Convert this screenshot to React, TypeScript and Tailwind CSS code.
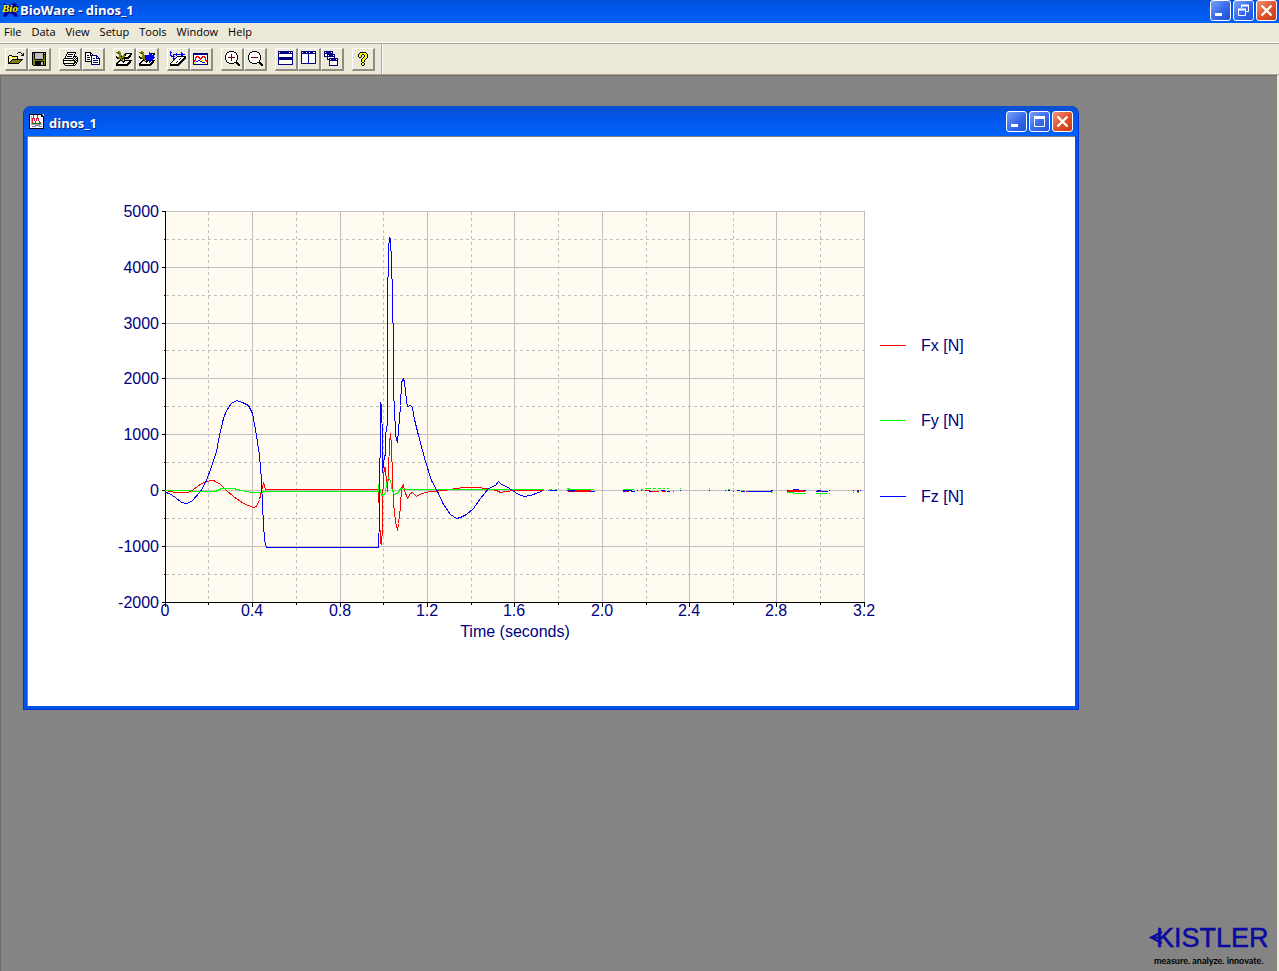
import React from 'react';
import clsx from 'clsx';

const PALETTE: Record<string, string> = {
  k: '#000000',
  w: '#ffffff',
  y: '#ffff00',
  o: '#808000',
  g: '#c0c0c0',
  n: '#000080',
  b: '#0000ff',
  r: '#ff0000',
  m: '#800000',
};

const ICONS: Record<string, string[]> = {
  open: [
    '................',
    '..........kkk...',
    '.........k...k.k',
    '..............kk',
    '.kkk.........kkk',
    'kywykkkkkk......',
    'kwywywywyk......',
    'kywywywywk......',
    'kwywkkkkkkkkkkk.',
    'kywkoooooooook..',
    'kwkoooooooook...',
    'kkoooooooook....',
    'kkkkkkkkkkk.....',
  ],
  save: [
    '',
    '.kkkkkkkkkkkkkk',
    '.kokggggggggkgk',
    '.kokggggggggkkk',
    '.kokggggggggkok',
    '.kokggggggggkok',
    '.kokggggggggkok',
    '.kokggggggggkok',
    '.kookkkkkkkkook',
    '.kooooooooooook',
    '.kookkkkkkkkkok',
    '.kookkkkkkggkok',
    '.kookkkkkkggkok',
    '.kookkkkkkggkok',
    '..kkkkkkkkkkkkk',
  ],
  print: [
    '',
    '.....kkkkkkkkk..',
    '.....kwwwwwwwk..',
    '....kwkkkkkwk...',
    '....kwwwwwwwk...',
    '...kwkkkkkwkkkk.',
    '...kwwwwwwwkwkwk',
    '..kkkkkkkkkwkwkk',
    '.kwwwwwwwwwkwkwk',
    '.kkkkkkkkkkkkwkk',
    '.kwwwwwyyywwkkwk',
    '.kwwwwwwwwwwkkk.',
    '.kkkkkkkkkkkkwk.',
    '..kwwwwwwwwkwk..',
    '...kkkkkkkkkk...',
  ],
  copy: [
    '',
    'kkkkkk..........',
    'kwwwwkk.........',
    'kwwwwkwk........',
    'kwkkwknnnnnn....',
    'kwwwwwnwwwwnn...',
    'kwkkkwnwwwwnwn..',
    'kwwwwwnwnnwnnnn.',
    'kwkkkwnwwwwwwwn.',
    'kwwwwwnwnnnnnwn.',
    'kkkkkknwwwwwwwn.',
    '......nwnnnnnwn.',
    '......nwwwwwwwn.',
    '......nnnnnnnnn.',
  ],
  acquire: [
    '..oo............',
    'ooooo...........',
    '.okoo....kkkkkkk',
    '...oo...kkwwwwkk',
    '...ooo.ookwwwkk.',
    'k..ookooowwwkkk.',
    'kkooooookkkkkk..',
    '.kkoookkkkkkk...',
    '....kooyk.......',
    '...kkkoykkkkkkkk',
    '..kkwwkkkwwwwkk.',
    '.kkwwwwkwwwwkkk.',
    'kkwwwwwwwwwkkk..',
    'kkkkkkkkkkkkk...',
    'kkkkkkkkkkkk....',
  ],
  trigger: [
    '..oo............',
    'ooooo.....b.....',
    '.okoo.....bbkkkk',
    '...oo.....bbbwkk',
    '...ooobbbbbbbbk.',
    'k..ooobbbbbbbbb.',
    'kkooookbbbbbbbbb',
    '.kkooobbbbbbbbb.',
    '....kobbbbbbbb..',
    '...kkkykkkbbbkkk',
    '..kkwwkkkwbbwkk.',
    '.kkwwwwkwwbwkkk.',
    'kkwwwwwwwwwkkk..',
    'kkkkkkkkkkkkk...',
    'kkkkkkkkkkkk....',
  ],
  plate: [
    'b...............',
    'bb.........b....',
    'b.....b....bb...',
    'b..bbbbbbbbbbbb.',
    'bb.b..b....bb...',
    '.bbbb..kkkkkkkkk',
    '...b..kwwwwwwwkk',
    '...bbkwwwwkwwkkk',
    '...bkwwwwkwwkkk.',
    '...kwwwwwwwkkk..',
    '..kwwwwkwwkkk...',
    '.kwwwwkwwkkk....',
    'kwwwwwwwkkk.....',
    'kkkkkkkkkk......',
    'kkkkkkkkk.......',
  ],
  graph: [
    '',
    '',
    'nnnnnnnnnnnnnnn',
    'nnnnnnnnnnnnnnn',
    'nwwwwwwwwwwwwwn',
    'nwwrrrwwwrrrwwn',
    'nwrrwrrwrrwrrwn',
    'nwrwwwrrrwwwrwn',
    'nwrwwwwrwwwwrwn',
    'nrrwwbbwyywwrrn',
    'nrwbbwwbbyywwrn',
    'nwywwwwwwbbbwwn',
    'nyywwwwwwwwyywn',
    'nnnnnnnnnnnnnnn',
  ],
  tileRows: [
    'nnnnnnnnnnnnnnn',
    'nwnnnnnnnnnwnwn',
    'nnnnnnnnnnnnnnn',
    'nwwwwwwwwwwwwwn',
    'nwwwwwwwwwwwwwn',
    'nwwwwwwwwwwwwwn',
    'nnnnnnnnnnnnnnn',
    'nnnnnnnnnnnnnnn',
    'nnnnnnnnnnnnnnn',
    'nwwwwwwwwwwwwwn',
    'nwwwwwwwwwwwwwn',
    'nwwwwwwwwwwwwwn',
    'nwwwwwwwwwwwwwn',
    'nnnnnnnnnnnnnnn',
  ],
  tileColumns: [
    'nnnnnnnnnnnnnnn',
    'nwnnnwnnwnnnwwn',
    'nnnnnnnnnnnnnnn',
    'nwwwwwwnwwwwwwn',
    'nwwwwwwnwwwwwwn',
    'nwwwwwwnwwwwwwn',
    'nwwwwwwnwwwwwwn',
    'nwwwwwwnwwwwwwn',
    'nwwwwwwnwwwwwwn',
    'nwwwwwwnwwwwwwn',
    'nwwwwwwnwwwwwwn',
    'nwwwwwwnwwwwwwn',
    'nnnnnnnnnnnnnnn',
  ],
  cascade: [
    'nnnnnnnnn.....',
    'nwnnnnnwn.....',
    'nnnnnnnnn.....',
    'nwwnnnnnnnn...',
    'nwwnwnnnnwn...',
    'nnnnnnnnnnn...',
    '...nwwwwwwn...',
    '...nwnnnnnnnnn',
    '...nnnwnnnnnwn',
    '.....nnnnnnnnn',
    '.....nwwwwwwwn',
    '.....nwwwwwwwn',
    '.....nwwwwwwwn',
    '.....nwwwwwwwn',
    '.....nnnnnnnnn',
  ],
  help: [
    '',
    '.....kkkkkk...',
    '....kyyyyyyk..',
    '...kyyykkyyyk.',
    '...kyyk..kyyk.',
    '...kyyk..kyyk.',
    '....kk..kyyyk.',
    '.......kyyyk..',
    '......kyyyk...',
    '......kyyk....',
    '......kyyk....',
    '.......kk.....',
    '......kyyk....',
    '......kyyk....',
    '.......kk.....',
  ],
};

const zoomIcon = (plus: boolean) => [
  '.....kkkkk......',
  '...kkwwwwwkk....',
  '..kwwwwwwwwwk...',
  plus ? '..kwwwwmwwwwk...' : '..kwwwwwwwwwk...',
  plus ? '.kwwwwwmwwwwwk..' : '.kwwwwwwwwwwwk..',
  plus ? '.kwwwwwmwwwwwk..' : '.kwwwwwwwwwwwk..',
  '.kwwmmmmmmmwwk..',
  plus ? '.kwwwwwmwwwwwk..' : '.kwwwwwwwwwwwk..',
  plus ? '.kwwwwwmwwwwwk..' : '.kwwwwwwwwwwwk..',
  plus ? '..kwwwwmwwwwk...' : '..kwwwwwwwwwk...',
  '..kwwwwwwwwwk...',
  '...kkwwwwwkkkk..',
  '.....kkkkk..kkk.',
  '.............kkk',
  '..............kk',
];

ICONS.zoomIn = zoomIcon(true);
ICONS.zoomOut = zoomIcon(false);

const PixelIcon = ({ rows }: { rows: string[] }) => {
  const runs: React.ReactElement[] = [];
  rows.forEach((row, y) => {
    let x = 0;
    while (x < row.length) {
      let end = x + 1;
      while (row[end] === row[x]) end++;
      if (row[x] !== '.') {
        runs.push(<rect key={`${x}-${y}`} x={x} y={y} width={end - x} height={1} fill={PALETTE[row[x]]} />);
      }
      x = end;
    }
  });
  return (
    <svg width="16" height="16" viewBox="0 0 16 16" shapeRendering="crispEdges" aria-hidden="true">
      {runs}
    </svg>
  );
};

const TOOL_GROUPS = [
  [['open', 'Open'], ['save', 'Save']],
  [['print', 'Print'], ['copy', 'Copy']],
  [['acquire', 'Acquire data'], ['trigger', 'Start acquisition']],
  [['plate', 'Force plate'], ['graph', 'Graph']],
  [['zoomIn', 'Zoom in'], ['zoomOut', 'Zoom out']],
  [['tileRows', 'Tile horizontally'], ['tileColumns', 'Tile vertically'], ['cascade', 'Cascade']],
  [['help', 'Help']],
];

const MENUS = ['File', 'Data', 'View', 'Setup', 'Tools', 'Window', 'Help'];

type CaptionKind = 'minimize' | 'maximize' | 'restore' | 'close';

const CaptionButton = ({ kind }: { kind: CaptionKind }) => (
  <button
    type="button"
    aria-label={kind}
    className={clsx(
      'h-[21px] w-[21px] rounded-[3px] border border-white flex items-center justify-center shrink-0',
      kind === 'close'
        ? 'bg-linear-to-br from-[#ee9478] via-[#e0532b] to-[#c63a10]'
        : 'bg-linear-to-br from-[#7da2f5] via-[#3b6cec] to-[#1c4fd6]'
    )}
  >
    <svg width="19" height="19" viewBox="0 0 19 19" fill="none" stroke="#fff" aria-hidden="true">
      {kind === 'minimize' && <path d="M4 13.5h7" strokeWidth="3" />}
      {kind === 'maximize' && (
        <>
          <path d="M4.5 5v9.5h10V5" />
          <path d="M4 5.5h11" strokeWidth="3" />
        </>
      )}
      {kind === 'restore' && (
        <>
          <path d="M7.5 7V4.5M14.5 4v6.5H12" />
          <path d="M7 4.5h8M4 8.5h8" strokeWidth="2" />
          <path d="M4.5 8v6.5h7V8" />
        </>
      )}
      {kind === 'close' && <path d="M4.5 4.5l10 10M14.5 4.5l-10 10" strokeWidth="2.4" />}
    </svg>
  </button>
);

const AppIcon = () => (
  <svg width="17" height="16" viewBox="0 0 17 16" aria-hidden="true">
    <path d="M2 1l4 3 6-3 3 1-3 5 4 7-2 1-6-4-5 4-2-1 3-6-3-5z" fill="#00009c" />
    <path d="M1 4h15v6H1z" fill="#101030" />
    <text x="0" y="10" fontSize="11" fontWeight="bold" fontStyle="italic" fill="#ffff00" className="font-['Liberation_Serif',serif]">
      Bio
    </text>
  </svg>
);

const DocumentIcon = () => (
  <svg width="15" height="15" viewBox="0 0 15 15" shapeRendering="crispEdges" aria-hidden="true">
    <path d="M0 0h12l3 3v12H0z" fill="#000" />
    <path d="M1 1h11v2h2v11H1z" fill="#fff" />
    <path d="M12 0h3v3z" fill="#c0c0c0" />
    <path d="M2.5 11V2M2 10.5h11" stroke="#b0a0a0" />
    <path d="M3.5 9V6l1-3 1 3 1 2 1-2 1-3 1 3 1 2 1 1" fill="none" stroke="#e01030" />
    <path d="M3 9.5h9" stroke="#008000" />
    <path d="M3 12.5h3v-1h4v1h3" fill="none" stroke="#8080c0" />
  </svg>
);

const FZ =
  '165,492 169,493 175,497 181,502 186,503 191,501 200,491 206,480 211,466 216,451 219,435 223,418 226,410 231,403 236,400 242,402 248,405 252,413 256,435 259,455 261,480 262,506 264,540 266,547 378,547 379,518 380,402 381,405 382,440 382,472 384,455 385,455 385,435 387,423 387,306 388,249 389,237 390,239 391,261 392,295 393,349 393,394 394,406 395,435 397,442 398,430 400,405 401,382 403,378 404,382 406,400 407,406 410,405 412,407 414,419 418,435 425,461 431,480 437,491 443,504 450,514 456,518 460,517 466,514 473,508 480,498 488,488 495,485 498,481 501,484 506,486 512,490 518,494 524,496 530,495 538,492 543,490';
const FX =
  '165,490 175,492 188,492 193,489 201,483 210,480 213,480 220,484 226,490 233,496 243,503 253,507 256,506 259,499 261,491 263,482 265,489 378,489 379,515 380,543 381,544 382,527 382,501 383,477 384,467 385,467 386,483 387,491 388,470 389,443 390,433 391,445 392,477 393,503 395,521 397,530 398,523 400,506 401,488 403,484 404,490 407,498 410,493 412,492 416,496 421,493 430,491 443,490 456,488 463,487 478,487 485,488 496,490 500,492 506,491 513,490 543,490';
const FY =
  '165,490 215,491 221,488 233,488 241,490 251,492 261,492 263,491 378,491 378,484 380,490 381,495 385,493 386,483 388,477 390,480 392,491 394,494 398,492 400,488 405,489 543,489';

// short dashes left by each channel once the plate has settled
const TAIL_FX = 'M540 490h3 M567 491h3 M574 490h16 M573 491h16 M624 491h4 M645 490h3 M650 491h8 M661 491h4 M672 491h1 M745 491h2 M786 491h18 M787 490h16 M818 491h3 M856 490h2';
const TAIL_FY = 'M548 489h3 M554 489h2 M566 488h3 M567 489h26 M622 489h11 M640 489h2 M644 488h6 M652 488h3 M657 488h3 M662 488h2 M666 488h2 M679 488h1 M708 488h1 M727 489h2 M741 490h2 M770 492h2 M786 492h7 M792 493h13 M815 493h11 M828 493h1 M852 492h1 M856 492h2';
const TAIL_FZ = 'M547 490h1 M549 490h7 M566 490h8 M570 491h24 M622 490h9 M622 491h6 M630 491h4 M636 490h1 M640 490h1 M644 490h5 M648 491h4 M653 491h3 M660 490h4 M666 491h3 M679 490h1 M708 490h1 M724 490h1 M727 490h2 M732 491h1 M736 490h3 M740 491h4 M745 491h26 M770 490h2 M786 490h7 M792 489h6 M798 490h7 M815 491h12 M816 490h4 M828 490h1 M852 490h1 M856 491h2 M859 490h1';

const X_MAJOR = [165, 252, 340, 427, 514, 602, 689, 776, 864];
const X_MINOR = [208, 296, 383, 471, 558, 646, 733, 820];
const X_LABELS = ['0', '0.4', '0.8', '1.2', '1.6', '2.0', '2.4', '2.8', '3.2'];
const Y_MAJOR = [211, 267, 323, 378, 434, 490, 546, 602];
const Y_MINOR = [239, 295, 350, 406, 462, 518, 574];
const Y_LABELS = ['5000', '4000', '3000', '2000', '1000', '0', '-1000', '-2000'];

const LEGEND = [
  { label: 'Fx [N]', y: 345, color: '#ff0000' },
  { label: 'Fy [N]', y: 420, color: '#00ff00' },
  { label: 'Fz [N]', y: 496, color: '#0000ff' },
];

const ForceChart = () => (
  <svg
    viewBox="28 137 1047 569"
    className="block w-full h-auto font-['Liberation_Sans',Arial,sans-serif] text-base"
    role="img"
    aria-label="Fx, Fy and Fz against time"
  >
    <rect x="165" y="211" width="700" height="392" fill="#fffbf0" />
    <g transform="translate(0.5 0.5)" fill="none" strokeWidth="1" strokeLinejoin="bevel" shapeRendering="crispEdges">
      <g stroke="#c0c0c0">
        {X_MAJOR.map((x) => <path key={x} d={`M${x} 211V602`} />)}
        {Y_MAJOR.map((y) => <path key={y} d={`M165 ${y}H864`} />)}
        <g strokeDasharray="3 3">
          {X_MINOR.map((x) => <path key={x} d={`M${x} 211V602`} />)}
          {Y_MINOR.map((y) => <path key={y} d={`M165 ${y}H864`} />)}
        </g>
      </g>
      <g stroke="#000">
        <path d="M165 211V602H864" />
        {Y_MAJOR.map((y) => <path key={y} d={`M161 ${y}H165`} />)}
        {Y_MINOR.map((y) => <path key={y} d={`M163 ${y}H165`} />)}
        {X_MAJOR.map((x) => <path key={x} d={`M${x} 602v4`} />)}
        {X_MINOR.map((x) => <path key={x} d={`M${x} 602v2`} />)}
      </g>
      <polyline points={FX} stroke="#ff0000" />
      <polyline points={FY} stroke="#00ff00" />
      <polyline points={FZ} stroke="#0000ff" />
      <path d={TAIL_FY} stroke="#00ff00" />
      <path d={TAIL_FZ} stroke="#0000ff" />
      <path d={TAIL_FX} stroke="#ff0000" />
      {LEGEND.map((item) => <path key={item.label} d={`M879 ${item.y}h26`} stroke={item.color} />)}
    </g>
    <g fill="#000080">
      {Y_LABELS.map((label, i) => (
        <text key={label} x="159" y={Y_MAJOR[i] + 6} textAnchor="end">{label}</text>
      ))}
      {X_LABELS.map((label, i) => (
        <text key={label} x={X_MAJOR[i]} y="616" textAnchor="middle">{label}</text>
      ))}
      <text x="515" y="637" textAnchor="middle">Time (seconds)</text>
      {LEGEND.map((item) => (
        <text key={item.label} x="921" y={item.y + 6}>{item.label}</text>
      ))}
    </g>
  </svg>
);

const ChartWindow = () => (
  <section className="w-full max-w-[1056px] rounded-t-lg bg-[#0054e3] border-x border-b border-[#0831d9] overflow-hidden">
    <header className="h-[30px] pl-[5px] pr-[5px] flex items-center gap-[5px] bg-linear-to-b from-[#0a4fd0] via-[#0058ee] to-[#0062fa]">
      <DocumentIcon />
      <h2 className="flex-1 pt-1 text-[13px] leading-5 font-bold text-white [text-shadow:1px_1px_#0f1f80]">dinos_1</h2>
      <div className="flex gap-[2px]">
        <CaptionButton kind="minimize" />
        <CaptionButton kind="maximize" />
        <CaptionButton kind="close" />
      </div>
    </header>
    <div className="mx-[3px] mb-[3px] border-t border-l border-[#808080] bg-white">
      <ForceChart />
    </div>
  </section>
);

const KistlerLogo = () => (
  <svg width="126" height="44" viewBox="1148 923 126 44" role="img" aria-label="Kistler">
    <path d="M1162 932l-11 5.500l11 5.500M1151 937.500h8" fill="none" stroke="#0a0aa0" strokeWidth="2" />
    <text x="1156" y="947" fontSize="27" fill="#0a0aa0" stroke="#0a0aa0" strokeWidth="0.5" className="font-['Liberation_Sans',Arial,sans-serif]">
      KISTLER
    </text>
    <text x="1154" y="964" fontSize="9" fontWeight="bold" fill="#000" className="font-['Lato',sans-serif]">
      measure. analyze. innovate.
    </text>
  </svg>
);

const App = () => {
  return (
    <div className="min-h-screen flex flex-col bg-[#ece9d8] font-['Open_Sans','Noto_Sans',sans-serif]">
      <header className="h-[23px] pl-[2px] pr-[2px] pb-[3px] flex items-center gap-px bg-linear-to-b from-[#0050dc] via-[#0058f0] to-[#0062fa]">
        <AppIcon />
        <h1 className="flex-1 text-[13px] leading-5 font-bold text-white [text-shadow:1px_1px_#0f1f80]">BioWare - dinos_1</h1>
        <div className="flex gap-[2px]">
          <CaptionButton kind="minimize" />
          <CaptionButton kind="restore" />
          <CaptionButton kind="close" />
        </div>
      </header>

      <nav className="h-[19px] pl-1 flex items-start gap-[10px] text-[11px] leading-[18px] text-black">
        {MENUS.map((menu) => (
          <button key={menu} type="button">{menu}</button>
        ))}
      </nav>

      <div className="h-[33px] border-t border-b border-t-white border-b-[#aca899] shrink-0">
        <div className="h-full border-t border-[#aca899] flex pl-[5px]">
          <div className="flex gap-2 pt-1">
            {TOOL_GROUPS.map((group) => (
              <div key={group[0][0]} className="flex">
                {group.map(([icon, label]) => (
                  <button
                    key={icon}
                    type="button"
                    aria-label={label}
                    title={label}
                    className="h-[23px] w-[23px] flex items-center justify-center border-t border-l border-r-2 border-b-2 border-t-white border-l-white border-r-[#8f8c80] border-b-[#8f8c80]"
                  >
                    <PixelIcon rows={ICONS[icon]} />
                  </button>
                ))}
              </div>
            ))}
          </div>
          <div className="ml-[6px] w-[2px] border-l border-[#aca899] bg-white" />
        </div>
      </div>

      <main className="flex-1 mr-[2px] pt-[30px] pl-[22px] flex flex-col bg-[#848484] border-t border-l border-[#716f64]">
        <ChartWindow />
        <div className="mt-auto self-end pr-[3px] pb-1">
          <KistlerLogo />
        </div>
      </main>
    </div>
  );
};

export default App;
